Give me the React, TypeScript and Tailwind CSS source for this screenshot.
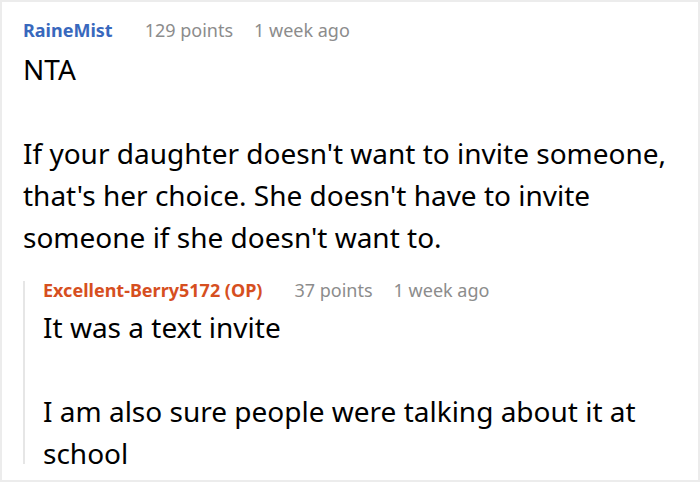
import React from 'react';

interface CommentProps {
  author: string;
  authorColor: string;
  points: string;
  age: string;
}

const Meta: React.FC<CommentProps> = ({ author, authorColor, points, age }) => (
  <div className="flex items-baseline text-[18px] leading-[18px]">
    <span className={`font-bold ${authorColor}`}>{author}</span>
    <span className="ml-[32px] text-[#8c8c8c]">{points}</span>
    <span className="ml-[21px] text-[#8c8c8c]">{age}</span>
  </div>
);

const App: React.FC = () => {
  return (
    <div
      className="w-[700px] h-[482px] overflow-hidden border-2 border-[#ececec] bg-white pl-[21px] pr-5 pt-[19px] text-black"
      style={{ fontFamily: '"Noto Sans", "Open Sans", sans-serif' }}
    >
      <Meta author="RaineMist" authorColor="text-[#3868bd]" points="129 points" age="1 week ago" />
      <div className="mt-[9px] text-[28px] leading-[42px]">
        <p className="mb-[42px]">NTA</p>
        <p>
          If your daughter doesn't want to invite someone, that's her choice. She doesn't have to invite
          someone if she doesn't want to.
        </p>
      </div>

      <div className="mt-[23px] h-[183px] border-l-2 border-[#e6e6e6] pl-[18px]">
        <Meta
          author="Excellent-Berry5172 (OP)"
          authorColor="text-[#d64f1f]"
          points="37 points"
          age="1 week ago"
        />
        <div className="mt-[7px] text-[28px] leading-[42px]">
          <p className="mb-[42px]">It was a text invite</p>
          <p>I am also sure people were talking about it at school</p>
        </div>
      </div>
    </div>
  );
};

export default App;
